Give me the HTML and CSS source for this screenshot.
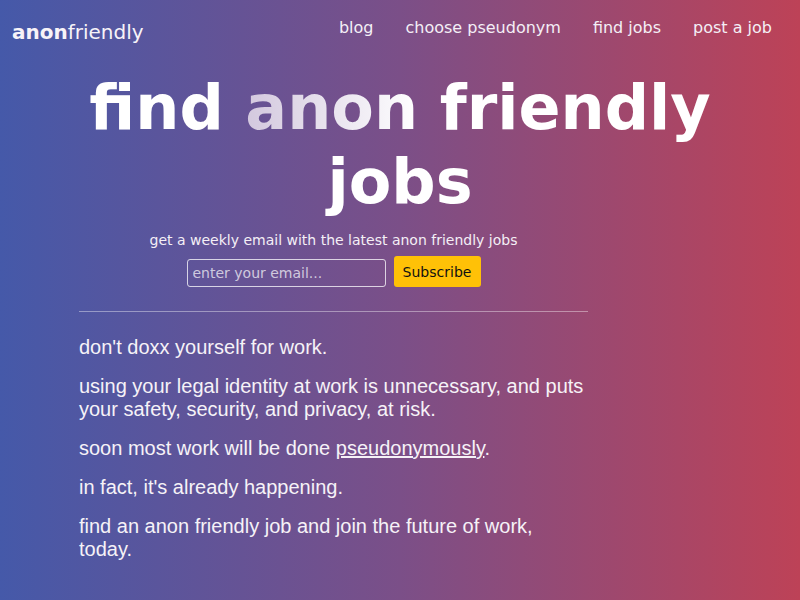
FILE: index.html
```html
<!DOCTYPE html>
<html lang="en">
<head>
<meta charset="utf-8">
<title>anonfriendly</title>
<link rel="stylesheet" href="styles.css">
</head>
<body>
<div class="page">
  <header class="header">
    <a class="logo" href="#"><b>anon</b>friendly</a>
    <nav class="nav">
      <a href="#">blog</a>
      <a href="#">choose pseudonym</a>
      <a href="#">find jobs</a>
      <a href="#">post a job</a>
    </nav>
  </header>
  <h1 class="title">find <span class="grad">anon</span> friendly jobs</h1>
  <main class="content">
    <p class="sub">get a weekly email with the latest anon friendly jobs</p>
    <form class="form">
      <input class="email" type="email" placeholder="enter your email...">
      <button class="btn" type="button">Subscribe</button>
    </form>
    <hr class="rule">
    <div class="copy">
      <p>don't doxx yourself for work.</p>
      <p>using your legal identity at work is unnecessary, and puts your safety, security, and privacy, at risk.</p>
      <p>soon most work will be done <a href="#">pseudonymously</a>.</p>
      <p>in fact, it's already happening.</p>
      <p>find an anon friendly job and join the future of work, today.</p>
    </div>
  </main>
</div>
</body>
</html>
```
FILE: styles.css
```css
html, body {
  margin: 0;
  padding: 0;
  height: 100%;
}
body {
  background: linear-gradient(90deg, #4559a9 0%, #7b4f88 50%, #bd4257 100%);
  color: #f4eff6;
  font-family: "DejaVu Sans", sans-serif;
  min-height: 600px;
}
.page {
  min-height: 600px;
}
a {
  color: inherit;
  text-decoration: none;
}
.header {
  display: flex;
  justify-content: space-between;
  align-items: flex-start;
  padding: 18px 28px 0 12px;
}
.logo {
  font-size: 20px;
  margin-top: 2px;
  color: #f7f3f8;
}
.logo b {
  font-weight: bold;
}
.nav {
  display: flex;
  gap: 32px;
  font-size: 16px;
}
.title {
  margin: 27px 0 0;
  text-align: center;
  font-size: 62px;
  line-height: 74px;
  font-weight: bold;
  color: #fff;
  padding: 0 60px;
}
.grad {
  background: linear-gradient(90deg, #d3c8de, #ffffff);
  -webkit-background-clip: text;
  background-clip: text;
  color: transparent;
}
.content {
  width: 509px;
  margin: 13px 0 0 79px;
}
.sub {
  margin: 0;
  font-size: 14px;
  text-align: center;
}
.form {
  display: flex;
  justify-content: center;
  align-items: flex-end;
  gap: 8px;
  margin-top: 8px;
}
.email {
  width: 199px;
  height: 28px;
  box-sizing: border-box;
  background: transparent;
  border: 1px solid rgba(255, 255, 255, 0.75);
  border-radius: 3px;
  padding: 0 5px;
  font-family: "DejaVu Sans", sans-serif;
  font-size: 14px;
  color: #fff;
}
.email::placeholder {
  color: rgba(255, 255, 255, 0.7);
}
.btn {
  height: 31px;
  width: 87px;
  background: #ffc107;
  border: none;
  border-radius: 3px;
  font-family: "DejaVu Sans", sans-serif;
  font-size: 14px;
  color: #111;
  padding: 0;
}
.rule {
  margin: 24px 0 0;
  border: none;
  border-top: 1px solid rgba(255, 255, 255, 0.4);
}
.copy {
  margin-top: 24px;
  font-family: "Liberation Sans", Arial, sans-serif;
  font-size: 20px;
  color: #f6f2f7;
}
.copy p {
  margin: 0 0 16px;
}
.copy a {
  text-decoration: underline;
}
```
